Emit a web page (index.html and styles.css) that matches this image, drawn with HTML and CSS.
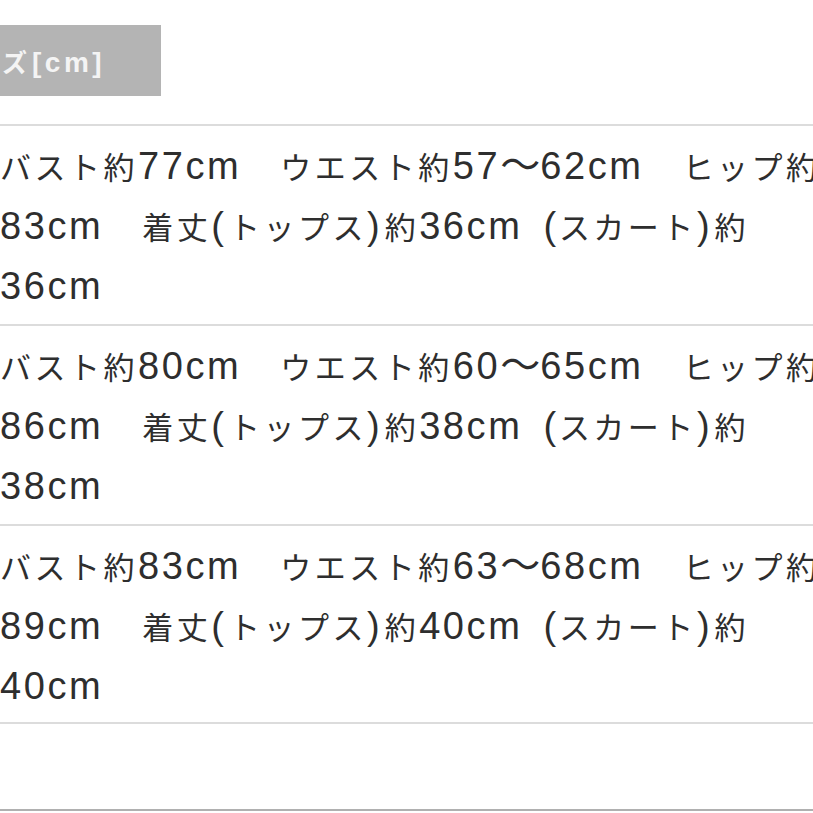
FILE: index.html
```html
<!DOCTYPE html>
<html lang="ja">
<head>
<meta charset="utf-8">
<link rel="stylesheet" href="styles.css">
</head>
<body>
<div class="page">
  <div class="tab"><span class="tab-label">ズ<span class="en">[cm]</span></span></div>
  <div class="rows">
    <div class="row">バスト約<span class="en">77cm</span><span class="sep">　</span>ウエスト約<span class="en">57</span><span class="tilde">〜</span><span class="en">62cm</span><span class="sep">　</span>ヒップ約<br><span class="en">83cm</span><span class="sep">　</span>着丈<span class="en paren">(</span>トップス<span class="en paren">)</span>約<span class="en wide">36cm (</span>スカート<span class="en paren">)</span>約<br><span class="en">36cm</span></div>
    <div class="row">バスト約<span class="en">80cm</span><span class="sep">　</span>ウエスト約<span class="en">60</span><span class="tilde">〜</span><span class="en">65cm</span><span class="sep">　</span>ヒップ約<br><span class="en">86cm</span><span class="sep">　</span>着丈<span class="en paren">(</span>トップス<span class="en paren">)</span>約<span class="en wide">38cm (</span>スカート<span class="en paren">)</span>約<br><span class="en">38cm</span></div>
    <div class="row">バスト約<span class="en">83cm</span><span class="sep">　</span>ウエスト約<span class="en">63</span><span class="tilde">〜</span><span class="en">68cm</span><span class="sep">　</span>ヒップ約<br><span class="en">89cm</span><span class="sep">　</span>着丈<span class="en paren">(</span>トップス<span class="en paren">)</span>約<span class="en wide">40cm (</span>スカート<span class="en paren">)</span>約<br><span class="en">40cm</span></div>
  </div>
  <div class="footer-line"></div>
</div>
</body>
</html>
```
FILE: styles.css
```css
html, body {
  margin: 0;
  padding: 0;
  background: #ffffff;
}
.page {
  width: 813px;
  height: 813px;
  overflow: hidden;
  display: flex;
  flex-direction: column;
  font-family: "Noto Sans CJK JP", "Noto Sans", sans-serif;
  color: #2e2e2e;
}
.tab {
  margin-top: 25px;
  width: 161px;
  height: 71px;
  flex: none;
  background: #b4b4b4;
  display: flex;
  align-items: center;
  box-sizing: border-box;
}
.tab-label {
  color: #f4f4f4;
  font-weight: bold;
  font-size: 25px;
  letter-spacing: 5px;
  margin-left: 2px;
}
.tab-label .en {
  font-family: "Liberation Sans", "Noto Sans", sans-serif;
  font-size: 28px;
  letter-spacing: 3.5px;
}
.rows {
  margin-top: 28px;
  display: flex;
  flex-direction: column;
}
.row {
  border-top: 2px solid #dcdcdc;
  padding: 6px 0 12px 0;
  font-size: 31px;
  line-height: 60px;
  letter-spacing: 3.5px;
  white-space: nowrap;
  height: 200px;
  box-sizing: border-box;
}
.row:last-child {
  border-bottom: 2px solid #dcdcdc;
}
.en {
  font-family: "Liberation Sans", "Noto Sans", sans-serif;
  font-size: 38px;
  letter-spacing: 2.6px;
}
.en.paren {
  letter-spacing: 5px;
}
.en.wide {
  word-spacing: 8px;
}
.sep {
  letter-spacing: 8px;
}
.tilde {
  font-size: 40px;
  letter-spacing: 0;
}
.footer-line {
  margin-top: 85px;
  height: 2px;
  flex: none;
  background: #b0b0b0;
}
```
